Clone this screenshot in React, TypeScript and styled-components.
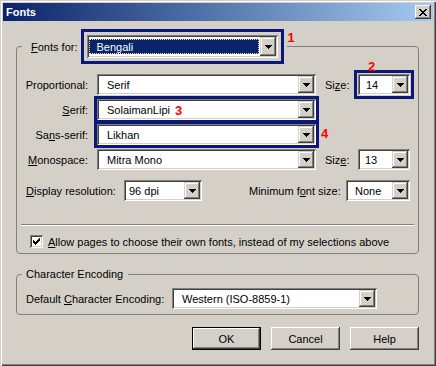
import React from "react";
import styled, { createGlobalStyle } from "styled-components";

const GlobalStyle = createGlobalStyle`
  html, body {
    margin: 0;
    padding: 0;
    background: #d4d0c8;
  }
  body {
    font-family: "Liberation Sans", Arial, sans-serif;
    font-size: 11px;
    color: #000;
  }
  * {
    box-sizing: border-box;
  }
`;

const Window = styled.div`
  width: 436px;
  height: 366px;
  padding: 3px;
  background: #d4d0c8;
  box-shadow: inset 1px 1px 0 #d4d0c8, inset 2px 2px 0 #fff,
    inset -1px -1px 0 #404040, inset -2px -2px 0 #808080;
  display: flex;
  flex-direction: column;
`;

const TitleBar = styled.div`
  height: 18px;
  display: flex;
  align-items: center;
  justify-content: space-between;
  padding: 0 2px 0 3px;
  background: linear-gradient(to right, #0a246a, #a6caf0);
`;

const Title = styled.span`
  color: #fff;
  font-weight: bold;
  font-size: 11px;
`;

const CloseButton = styled.div`
  width: 16px;
  height: 14px;
  display: flex;
  align-items: center;
  justify-content: center;
  background: #d4d0c8;
  box-shadow: inset -1px -1px 0 #404040, inset 1px 1px 0 #fff,
    inset -2px -2px 0 #808080;
`;

const Body = styled.div`
  flex: 1;
  display: flex;
  flex-direction: column;
  padding: 0 14px 0 13px;
`;

const Fieldset = styled.fieldset<{ $top: number }>`
  margin: ${(p) => p.$top}px 0 0;
  padding: 0;
  border: 1px solid #808080;
  border-radius: 4px;
  min-inline-size: 0;
`;

const Legend = styled.legend<{ $left: number; $right: number }>`
  margin-left: 5px;
  padding: 0 ${(p) => p.$right}px 0 ${(p) => p.$left}px;
`;

const LegendInner = styled.div`
  display: flex;
  align-items: center;
  gap: 10px;
`;

const Rows = styled.div<{ $top: number; $bottom: number }>`
  display: flex;
  flex-direction: column;
  gap: 4px;
  padding: ${(p) => p.$top}px 8px ${(p) => p.$bottom}px 0;
`;

const Row = styled.div<{ $indent?: number; $mt?: number }>`
  display: flex;
  align-items: center;
  height: 21px;
  gap: 9px;
  margin-top: ${(p) => p.$mt ?? 0}px;
  padding-left: ${(p) => p.$indent ?? 0}px;
`;

const PushRight = styled.div`
  margin-left: auto;
  display: flex;
  align-items: center;
  gap: 9px;
`;

const Label = styled.span<{ $width?: number; $align?: string }>`
  flex: none;
  width: ${(p) => (p.$width ? `${p.$width}px` : "auto")};
  text-align: ${(p) => p.$align ?? "right"};
  white-space: nowrap;
`;

const Key = styled.span`
  text-decoration: underline;
`;

const Field = styled.div<{ $width: number; $height: number }>`
  position: relative;
  flex: none;
  width: ${(p) => p.$width}px;
  height: ${(p) => p.$height}px;
  padding: 2px;
  display: flex;
  background: #fff;
  box-shadow: inset 1px 1px 0 #808080, inset -1px -1px 0 #fff,
    inset 2px 2px 0 #404040, inset -2px -2px 0 #d4d0c8;
`;

const Value = styled.span<{ $indent: number; $selected?: boolean }>`
  flex: 1;
  display: flex;
  align-items: center;
  white-space: nowrap;
  padding-left: ${(p) => p.$indent}px;
  margin: ${(p) => (p.$selected ? "2px 1px 2px 0" : "0")};
  background: ${(p) => (p.$selected ? "#0a246a" : "transparent")};
  color: ${(p) => (p.$selected ? "#fff" : "#000")};
  border: ${(p) => (p.$selected ? "1px dotted #e8dfae" : "none")};
`;

const DropButton = styled.span`
  flex: none;
  width: 16px;
  display: flex;
  align-items: center;
  justify-content: center;
  background: #d4d0c8;
  box-shadow: inset -1px -1px 0 #404040, inset 1px 1px 0 #d4d0c8,
    inset -2px -2px 0 #808080, inset 2px 2px 0 #fff;
`;

const Marked = styled.div<{ $offset: number }>`
  position: relative;
  display: flex;
  outline: 3px solid #0b1878;
  outline-offset: ${(p) => p.$offset}px;
`;

const Note = styled.span<{ $x: number; $y: number }>`
  position: absolute;
  left: ${(p) => p.$x}px;
  top: ${(p) => p.$y}px;
  color: #ff0000;
  font-weight: bold;
  font-size: 13px;
  line-height: 13px;
  z-index: 2;
`;

const Separator = styled.div`
  margin: 19px -4px 0 4px;
  height: 2px;
  border-top: 1px solid #808080;
  border-bottom: 1px solid #fff;
`;

const CheckRow = styled.label`
  display: flex;
  align-items: center;
  gap: 5px;
  margin-top: 5px;
  padding-left: 13px;
  white-space: nowrap;
`;

const CheckBox = styled.span`
  flex: none;
  width: 13px;
  height: 13px;
  display: flex;
  align-items: center;
  justify-content: center;
  background: #fff;
  box-shadow: inset 1px 1px 0 #808080, inset -1px -1px 0 #fff,
    inset 2px 2px 0 #404040, inset -2px -2px 0 #d4d0c8;
`;

const ButtonBar = styled.div`
  display: flex;
  justify-content: flex-end;
  gap: 10px;
  margin-top: 12px;
`;

const Button = styled.div<{ $default?: boolean }>`
  width: 69px;
  height: 23px;
  display: flex;
  align-items: center;
  justify-content: center;
  background: #d4d0c8;
  border: ${(p) => (p.$default ? "1px solid #000" : "none")};
  box-shadow: inset -1px -1px 0 #404040, inset 1px 1px 0 #fff,
    inset -2px -2px 0 #808080, inset 2px 2px 0 #d4d0c8;
`;

const Arrow = () => (
  <svg width="7" height="4" viewBox="0 0 7 4" shapeRendering="crispEdges">
    <rect x="0" y="0" width="7" height="1" fill="#000" />
    <rect x="1" y="1" width="5" height="1" fill="#000" />
    <rect x="2" y="2" width="3" height="1" fill="#000" />
    <rect x="3" y="3" width="1" height="1" fill="#000" />
  </svg>
);

const CloseGlyph = () => (
  <svg width="8" height="7" viewBox="0 0 8 7" shapeRendering="crispEdges">
    <rect x="0" y="0" width="2" height="1" />
    <rect x="6" y="0" width="2" height="1" />
    <rect x="1" y="1" width="2" height="1" />
    <rect x="5" y="1" width="2" height="1" />
    <rect x="2" y="2" width="4" height="1" />
    <rect x="3" y="3" width="2" height="1" />
    <rect x="2" y="4" width="4" height="1" />
    <rect x="1" y="5" width="2" height="1" />
    <rect x="5" y="5" width="2" height="1" />
    <rect x="0" y="6" width="2" height="1" />
    <rect x="6" y="6" width="2" height="1" />
  </svg>
);

const CheckMark = () => (
  <svg width="7" height="7" viewBox="0 0 7 7" shapeRendering="crispEdges">
    <rect x="6" y="0" width="1" height="1" />
    <rect x="5" y="1" width="2" height="1" />
    <rect x="0" y="2" width="1" height="1" />
    <rect x="4" y="2" width="3" height="1" />
    <rect x="0" y="3" width="2" height="1" />
    <rect x="3" y="3" width="3" height="1" />
    <rect x="0" y="4" width="5" height="1" />
    <rect x="1" y="5" width="3" height="1" />
    <rect x="2" y="6" width="1" height="1" />
  </svg>
);

interface ComboProps {
  width: number;
  value: string;
  height?: number;
  indent?: number;
  selected?: boolean;
}

const Combo = ({ width, value, height = 21, indent = 8, selected }: ComboProps) => (
  <Field $width={width} $height={height}>
    <Value $indent={selected ? 6 : indent} $selected={selected}>
      {value}
    </Value>
    <DropButton>
      <Arrow />
    </DropButton>
  </Field>
);

const App = () => {
  return (
    <>
      <GlobalStyle />
      <Window>
        <TitleBar>
          <Title>Fonts</Title>
          <CloseButton>
            <CloseGlyph />
          </CloseButton>
        </TitleBar>
        <Body>
          <Fieldset $top={14}>
            <Legend $left={9} $right={9}>
              <LegendInner>
                <Label>
                  <Key>F</Key>onts for:
                </Label>
                <Marked $offset={3}>
                  <Combo width={191} height={23} value="Bengali" selected />
                  <Note $x={200} $y={-4}>1</Note>
                </Marked>
              </LegendInner>
            </Legend>
            <Rows $top={16} $bottom={5}>
              <Row>
                <Label $width={71}>Proportional:</Label>
                <Combo width={219} value="Serif" />
                <Label $width={24} $align="left">
                  Si<Key>z</Key>e:
                </Label>
                <Marked $offset={1}>
                  <Combo width={52} value="14" indent={6} />
                  <Note $x={10} $y={-14}>2</Note>
                </Marked>
              </Row>
              <Row>
                <Label $width={71}>
                  <Key>S</Key>erif:
                </Label>
                <Marked $offset={0}>
                  <Combo width={219} value="SolaimanLipi" />
                  <Note $x={78} $y={5}>3</Note>
                </Marked>
              </Row>
              <Row>
                <Label $width={71}>
                  Sa<Key>n</Key>s-serif:
                </Label>
                <Marked $offset={0}>
                  <Combo width={219} value="Likhan" />
                  <Note $x={224} $y={3}>4</Note>
                </Marked>
              </Row>
              <Row>
                <Label $width={71}>
                  <Key>M</Key>onospace:
                </Label>
                <Combo width={219} value="Mitra Mono" />
                <Label $width={24} $align="left">
                  Siz<Key>e</Key>:
                </Label>
                <Combo width={52} value="13" indent={5} />
              </Row>
              <Row $indent={9} $mt={6}>
                <Label $width={89} $align="left">
                  <Key>D</Key>isplay resolution:
                </Label>
                <Combo width={78} value="96 dpi" indent={3} />
                <PushRight>
                  <Label $width={88}>
                    Minimum f<Key>o</Key>nt size:
                  </Label>
                  <Combo width={64} value="None" indent={7} />
                </PushRight>
              </Row>
              <Separator />
              <CheckRow>
                <CheckBox>
                  <CheckMark />
                </CheckBox>
                <span>
                  <Key>A</Key>llow pages to choose their own fonts, instead of
                  my selections above
                </span>
              </CheckRow>
            </Rows>
          </Fieldset>

          <Fieldset $top={14}>
            <Legend $left={4} $right={5}>
              Character Encoding
            </Legend>
            <Rows $top={8} $bottom={5}>
              <Row $indent={9}>
                <Label $width={137} $align="left">
                  Default <Key>C</Key>haracter Encoding:
                </Label>
                <Combo width={205} value="Western (ISO-8859-1)" />
              </Row>
            </Rows>
          </Fieldset>

          <ButtonBar>
            <Button $default>OK</Button>
            <Button>Cancel</Button>
            <Button>Help</Button>
          </ButtonBar>
        </Body>
      </Window>
    </>
  );
};

export default App;
